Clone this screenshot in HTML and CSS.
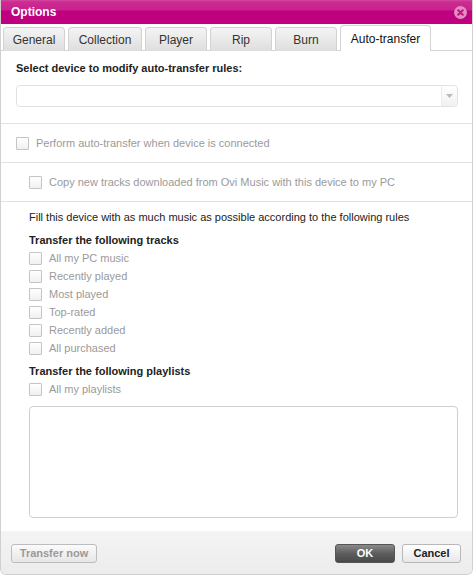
FILE: index.html
```html
<!DOCTYPE html>
<html>
<head>
<meta charset="utf-8">
<link rel="stylesheet" href="styles.css">
</head>
<body>
<div class="window">
  <div class="titlebar">
    <span class="title">Options</span>
    <svg class="close" width="13" height="13" viewBox="0 0 13 13">
      <circle cx="6.5" cy="6.5" r="6.5" fill="#e58cc3"/>
      <path d="M4.2 4.2 L8.8 8.8 M8.8 4.2 L4.2 8.8" stroke="#c0137f" stroke-width="2" stroke-linecap="round"/>
    </svg>
  </div>
  <div class="tabs">
    <div class="tab t-general">General</div>
    <div class="tab t-collection">Collection</div>
    <div class="tab t-player">Player</div>
    <div class="tab t-rip">Rip</div>
    <div class="tab t-burn">Burn</div>
    <div class="tab active">Auto-transfer</div>
  </div>
  <div class="content">
    <div class="sec sec-device">
      <div class="bold">Select device to modify auto-transfer rules:</div>
      <div class="select">
        <div class="select-field"></div>
        <div class="select-arrow"><svg width="7" height="4" viewBox="0 0 7 4"><path d="M0 0 L7 0 L3.5 4 Z" fill="#bbb"/></svg></div>
      </div>
    </div>
    <div class="sec sec-row">
      <label class="check"><span class="box"></span>Perform auto-transfer when device is connected</label>
    </div>
    <div class="sec sec-row indent">
      <label class="check"><span class="box"></span>Copy new tracks downloaded from Ovi Music with this device to my PC</label>
    </div>
    <div class="sec sec-rules">
      <div class="fill">Fill this device with as much music as possible according to the following rules</div>
      <div class="bold head-tracks">Transfer the following tracks</div>
      <div class="list">
        <label class="check item"><span class="box"></span>All my PC music</label>
        <label class="check item"><span class="box"></span>Recently played</label>
        <label class="check item"><span class="box"></span>Most played</label>
        <label class="check item"><span class="box"></span>Top-rated</label>
        <label class="check item"><span class="box"></span>Recently added</label>
        <label class="check item"><span class="box"></span>All purchased</label>
      </div>
      <div class="bold head-playlists">Transfer the following playlists</div>
      <label class="check item"><span class="box"></span>All my playlists</label>
      <div class="listbox"></div>
    </div>
  </div>
  <div class="footer">
    <button class="btn btn-transfer">Transfer now</button>
    <div class="spacer"></div>
    <button class="btn btn-ok">OK</button>
    <button class="btn btn-cancel">Cancel</button>
  </div>
</div>
</body>
</html>
```

FILE: styles.css
```css
* { box-sizing: border-box; }
html, body { margin: 0; padding: 0; background: #fff; }
body {
  font-family: "Liberation Sans", Arial, sans-serif;
  font-size: 11px;
  color: #222;
}
.window {
  width: 473px;
  height: 575px;
  display: flex;
  flex-direction: column;
  overflow: hidden;
  border-radius: 0 0 6px 6px;
  border-left: 1px solid #d0d0d0;
  border-right: 1px solid #d0d0d0;
  border-bottom: 1px solid #d0d0d0;
}
.titlebar {
  height: 24px;
  flex: none;
  margin: 0 -1px;
  display: flex;
  align-items: center;
  padding: 0 6px 0 11px;
  background: linear-gradient(#d24a9e 0px, #cd2a92 2px, #c9238d 10px, #bf007f 11px, #bf007f 100%);
}
.title {
  color: #fff;
  font-weight: bold;
  font-size: 12px;
  flex: 1;
}
.close { display: block; }
.tabs {
  height: 27px;
  flex: none;
  display: flex;
  align-items: flex-end;
  gap: 3px;
  padding: 0 0 0 2px;
  border-bottom: 1px solid #d4d4d4;
}
.tab {
  height: 24px;
  margin-bottom: -1px;
  display: flex;
  align-items: center;
  justify-content: center;
  border: 1px solid #d2d2d2;
  border-bottom: none;
  border-radius: 4px 4px 0 0;
  background: linear-gradient(#f4f4f4, #dedede);
  color: #333;
  font-size: 12px;
}
.t-general { width: 62px; }
.t-collection { width: 74px; }
.t-player { width: 62px; }
.t-rip { width: 62px; }
.t-burn { width: 62px; }
.tab.active {
  width: 91px;
  height: 26px;
  background: #fff;
  color: #111;
  border-color: #d4d4d4;
  padding-top: 1px;
}
.content { flex: 1; }
.sec { border-bottom: 1px solid #e2e2e2; }
.bold { font-weight: bold; color: #222; line-height: 14px; }
.sec-device { padding: 10px 14px 16px 15px; }
.select {
  margin-top: 10px;
  height: 22px;
  display: flex;
  border: 1px solid #e2e2e2;
  border-radius: 4px;
  background: #fff;
}
.select-field { flex: 1; }
.select-arrow {
  width: 16px;
  border-left: 1px solid #ececec;
  background: linear-gradient(#fff, #f1f1f1);
  border-radius: 0 4px 4px 0;
  display: flex;
  align-items: center;
  justify-content: center;
}
.sec-row {
  height: 39px;
  display: flex;
  align-items: center;
  padding-left: 15px;
}
.sec-row.indent { padding-left: 28px; }
.check {
  display: flex;
  align-items: center;
  color: #9a9a9a;
  line-height: 14px;
}
.box {
  width: 13px;
  height: 13px;
  border: 1px solid #c4c4c4;
  border-radius: 1px;
  background: linear-gradient(#fff, #f0f0f0);
  margin-right: 7px;
  flex: none;
}
.sec-rules { border-bottom: none; padding: 8px 14px 0 28px; }
.fill { line-height: 14px; color: #222; }
.head-tracks { margin-top: 9px; margin-bottom: 2px; }
.item { height: 18px; }
.head-playlists { margin-top: 7px; margin-bottom: 2px; }
.listbox {
  margin-top: 8px;
  height: 112px;
  border: 1px solid #cfcfcf;
  border-radius: 4px;
  background: #fff;
}
.footer {
  height: 43px;
  flex: none;
  display: flex;
  align-items: center;
  gap: 7px;
  padding: 0 11px 0 10px;
  background: linear-gradient(#f4f4f4, #ececec);
}
.spacer { flex: 1; }
.btn {
  height: 19px;
  font-family: "Liberation Sans", Arial, sans-serif;
  font-size: 11px;
  font-weight: bold;
  border-radius: 3px;
  padding: 0;
  margin-top: 1px;
}
.btn-transfer {
  width: 86px;
  color: #9a9a9a;
  border: 1px solid #bdbdbd;
  background: linear-gradient(#fbfbfb, #e6e6e6);
}
.btn-ok {
  width: 60px;
  margin-left: 2px;
  color: #fff;
  border: 1px solid #555;
  background: linear-gradient(#8a8a8a, #5d5d5d 50%, #4a4a4a);
}
.btn-cancel {
  width: 59px;
  color: #222;
  border: 1px solid #b8b8b8;
  background: linear-gradient(#fff, #e8e8e8);
}
```
